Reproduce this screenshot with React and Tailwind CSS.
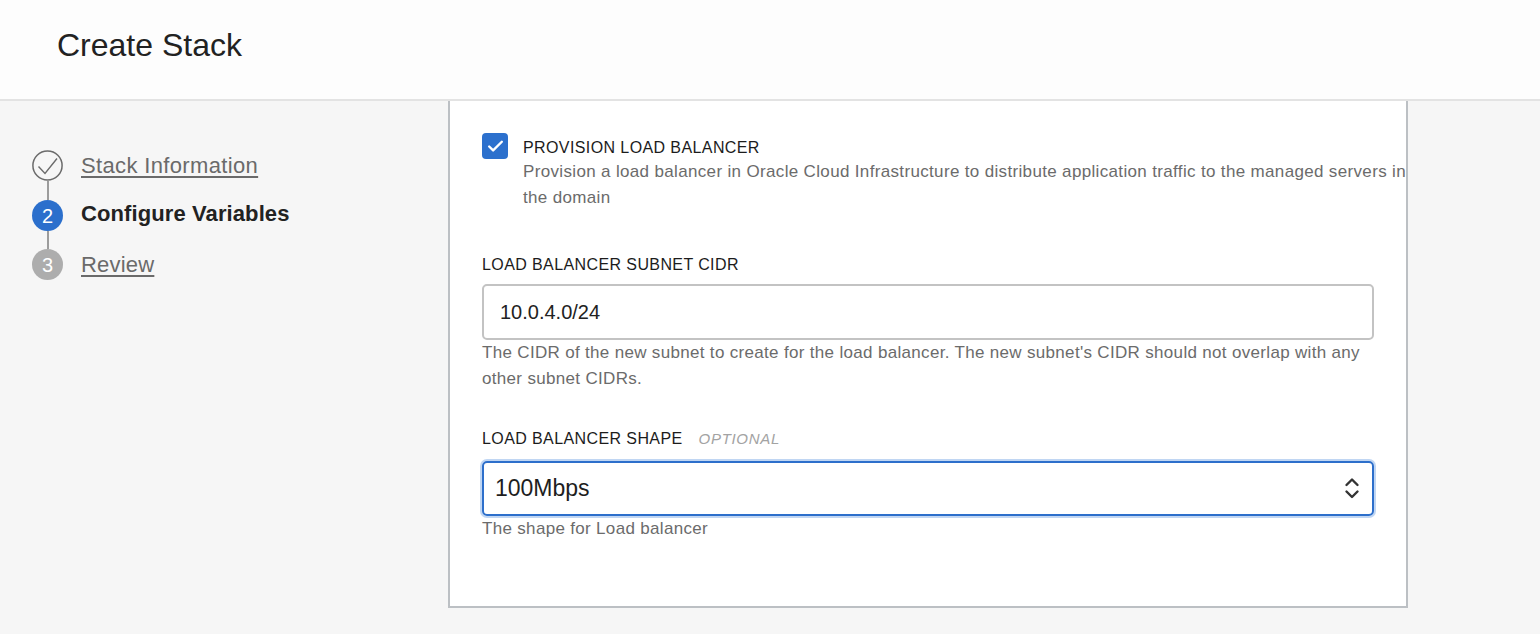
import { Check } from "lucide-react";

const font = { fontFamily: '"Liberation Sans", Arial, sans-serif' };

function StepCircleDone() {
  return (
    <svg width="31" height="31" viewBox="0 0 31 31" className="shrink-0">
      <circle cx="15.5" cy="15.5" r="14.6" fill="none" stroke="#6b6b6b" strokeWidth="1.5" />
      <path d="M6.5 16.5 L13 23.5 L25 8.5" fill="none" stroke="#6b6b6b" strokeWidth="1.4" />
    </svg>
  );
}

function Steps() {
  return (
    <nav className="pl-[32px] pt-[49px]">
      <div className="flex h-[31px] items-center">
        <StepCircleDone />
        <a className="ml-[18px] text-[22px] tracking-[0.35px] text-[#6a6a6a] underline underline-offset-[3px] decoration-[1.5px]">
          Stack Information
        </a>
      </div>
      <div className="ml-[14.5px] h-[19px] w-[2px] bg-[#9c9c9c]" />
      <div className="flex h-[31px] items-center">
        <div className="flex h-[31px] w-[31px] shrink-0 items-center justify-center rounded-full bg-[#2b6fcc] text-[20px] text-white">
          2
        </div>
        <span className="ml-[18px] -mt-[5px] text-[22px] font-bold tracking-[0.1px] text-[#222]">Configure Variables</span>
      </div>
      <div className="ml-[14.5px] h-[18px] w-[2px] bg-[#9c9c9c]" />
      <div className="flex h-[31px] items-center">
        <div className="flex h-[31px] w-[31px] shrink-0 items-center justify-center rounded-full bg-[#adadad] text-[20px] text-white">
          3
        </div>
        <a className="ml-[18px] text-[22px] tracking-[0.2px] text-[#6a6a6a] underline underline-offset-[3px] decoration-[1.5px]">
          Review
        </a>
      </div>
    </nav>
  );
}

function SelectChevrons() {
  return (
    <svg width="16" height="25" viewBox="0 0 16 25" className="shrink-0">
      <path d="M2.5 9 L8 3.5 L13.5 9" fill="none" stroke="#333" strokeWidth="2.4" strokeLinecap="round" strokeLinejoin="round" />
      <path d="M2.5 15.5 L8 21 L13.5 15.5" fill="none" stroke="#333" strokeWidth="2.4" strokeLinecap="round" strokeLinejoin="round" />
    </svg>
  );
}

export default function App() {
  return (
    <div className="h-[634px] w-[1540px] overflow-hidden bg-[#f6f6f6]" style={font}>
      {/* page title */}
      <header className="h-[101px] border-b-2 border-[#e3e3e3] bg-[#fdfdfd] pl-[57px] pt-[25px]">
        <h1 className="text-[32px] leading-[40px] text-[#222]">Create Stack</h1>
      </header>

      <div className="flex">
        <div className="w-[448px] shrink-0">
          <Steps />
        </div>

        {/* form panel, scrolled so its top edge is hidden */}
        <section className="h-[507px] w-[960px] shrink-0 border-x-2 border-b-2 border-[#bcc0c4] bg-white pl-[32px] pt-[32px]">
          <div className="flex">
            <div className="flex h-[26px] w-[26px] shrink-0 items-center justify-center rounded-[4px] bg-[#2c70cd]">
              <Check className="h-[19px] w-[19px] text-white" strokeWidth={3} />
            </div>
            <div className="ml-[15px] w-[886px]">
              <div className="mt-[4px] text-[16px] leading-[22px] font-medium tracking-[0.4px] text-[#1c1c1c]">
                PROVISION LOAD BALANCER
              </div>
              <p className="text-[17px] leading-[26px] tracking-[0.34px] text-[#6b6b6b]">
                Provision a load balancer in Oracle Cloud Infrastructure to distribute application traffic to the managed servers in the domain
              </p>
            </div>
          </div>

          <div className="mt-[43px] text-[16px] leading-[22px] font-medium tracking-[0.4px] text-[#1c1c1c]">
            LOAD BALANCER SUBNET CIDR
          </div>
          <div className="mt-[8px] flex h-[56px] w-[892px] items-center rounded-[5px] border-2 border-[#c3c3c3] pl-[16px] text-[20px] text-[#222]">
            10.0.4.0/24
          </div>
          <p className="w-[892px] text-[17px] leading-[26px] tracking-[0.32px] text-[#6b6b6b]">
            The CIDR of the new subnet to create for the load balancer. The new subnet's CIDR should not overlap with any other subnet CIDRs.
          </p>

          <div className="mt-[36px] flex items-baseline text-[16px] leading-[22px]">
            <span className="font-medium tracking-[0.4px] text-[#1c1c1c]">LOAD BALANCER SHAPE</span>
            <span className="ml-[16px] text-[15px] font-light italic tracking-[0.7px] text-[#a3a3a3]">OPTIONAL</span>
          </div>
          <div className="mt-[11px] flex h-[55px] w-[892px] items-center justify-between rounded-[5px] border-2 border-[#2d6fcb] pl-[11px] pr-[12px] text-[23px] text-[#1e1e1e] shadow-[0_0_0_2px_rgba(74,137,220,0.35)]">
            <span>100Mbps</span>
            <SelectChevrons />
          </div>
          <p className="text-[17px] leading-[26px] tracking-[0.32px] text-[#6b6b6b]">The shape for Load balancer</p>
        </section>
      </div>
    </div>
  );
}
